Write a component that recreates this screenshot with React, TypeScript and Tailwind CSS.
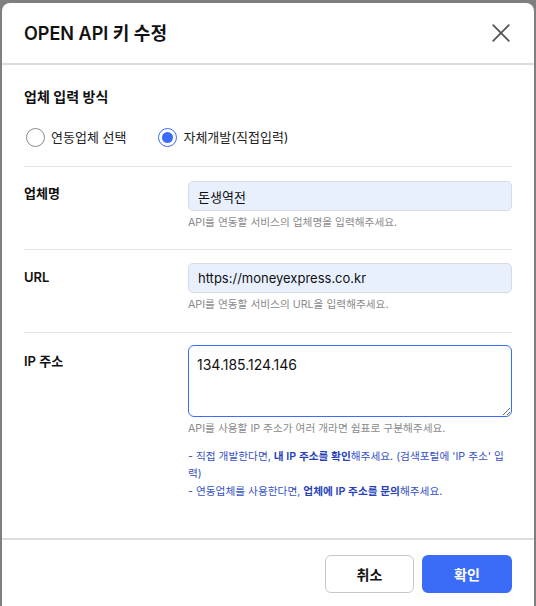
import { useState } from "react";

const font = { fontFamily: "Inter, 'Noto Sans CJK KR', sans-serif" };

const Radio = ({ checked, label, onClick }: { checked: boolean; label: string; onClick: () => void }) => (
  <label onClick={onClick} className="flex items-center gap-[6px] cursor-pointer">
    <span
      className={
        checked
          ? "flex justify-center items-center border border-[#3a6cf8] rounded-full w-[19px] h-[19px]"
          : "flex justify-center items-center border border-[#8a8a8a] rounded-full w-[19px] h-[19px]"
      }
    >
      {checked && <span className="bg-[#3a6cf8] rounded-full w-[11px] h-[11px]" />}
    </span>
    <span className="text-[13px] text-[#222] leading-[20px]">{label}</span>
  </label>
);

export default function App() {
  const [mode, setMode] = useState("self");
  const [name, setName] = useState("돈생역전");
  const [url, setUrl] = useState("https://moneyexpress.co.kr");
  const [ip, setIp] = useState("134.185.124.146");

  return (
    <div style={font} className="bg-[#7f7f7f] pt-[3px] pr-[2px] pl-[2px] w-[536px] h-[606px] overflow-hidden">
      <div className="flex flex-col bg-white rounded-t-[8px] w-[532px] min-h-[620px]">
        {/* header */}
        <div className="flex justify-between items-center px-[22px] border-[#dcdcdc] border-b-2 h-[62px]">
          <h1 className="font-semibold text-[#111] text-[18px]">OPEN API 키 수정</h1>
          <button className="flex justify-center items-center w-[22px] h-[22px]">
            <svg width="18" height="18" viewBox="0 0 18 18" fill="none" stroke="#555" strokeWidth="1.8" strokeLinecap="round">
              <path d="M1.2 1.2 L16.8 16.8 M16.8 1.2 L1.2 16.8" />
            </svg>
          </button>
        </div>

        {/* body */}
        <div className="px-[22px]">
          <div className="pt-[22px] pb-[19px] border-[#e2e2e2] border-b">
            <p className="font-semibold text-[#111] text-[14px] leading-[20px]">업체 입력 방식</p>
            <div className="flex gap-[32px] mt-[20px] ml-[2px]">
              <Radio checked={mode === "link"} label="연동업체 선택" onClick={() => setMode("link")} />
              <Radio checked={mode === "self"} label="자체개발(직접입력)" onClick={() => setMode("self")} />
            </div>
          </div>

          <div className="flex pt-[14px] pb-[18px] border-[#e2e2e2] border-b">
            <p className="mt-[2px] w-[164px] font-semibold text-[#111] text-[13px] leading-[20px]">업체명</p>
            <div className="flex-1">
              <input
                value={name}
                onChange={(e) => setName(e.target.value)}
                className="bg-[#e8f0fe] px-[9px] border border-[#d5dae3] rounded-[5px] outline-none w-full h-[30px] text-[#111] text-[13px]"
              />
              <p className="mt-[4px] text-[#8a8a8a] text-[10.7px] leading-[16px]">API를 연동할 서비스의 업체명을 입력해주세요.</p>
            </div>
          </div>

          <div className="flex pt-[13px] pb-[19px] border-[#e2e2e2] border-b">
            <p className="mt-[4px] w-[164px] font-semibold text-[#111] text-[13px] leading-[20px]">URL</p>
            <div className="flex-1">
              <input
                value={url}
                onChange={(e) => setUrl(e.target.value)}
                className="bg-[#e8f0fe] px-[9px] border border-[#d5dae3] rounded-[5px] outline-none w-full h-[30px] text-[#111] text-[13px]"
              />
              <p className="mt-[4px] text-[#8a8a8a] text-[10.7px] leading-[16px]">API를 연동할 서비스의 URL을 입력해주세요.</p>
            </div>
          </div>

          <div className="flex pt-[12px] pb-[38px]">
            <p className="mt-[6px] w-[164px] font-semibold text-[#111] text-[13px] leading-[20px]">IP 주소</p>
            <div className="flex-1">
              <textarea
                value={ip}
                onChange={(e) => setIp(e.target.value)}
                className="block px-[8px] py-[8px] border-[#3a6cf8] border-[1.5px] rounded-[6px] outline-none w-full h-[72px] text-[#111] text-[14px] leading-[22px] resize-y"
              />
              <p className="mt-[4px] text-[#8a8a8a] text-[10.7px] leading-[16px]">API를 사용할 IP 주소가 여러 개라면 쉼표로 구분해주세요.</p>
              <div className="flex flex-col gap-[1px] mt-[11px] text-[#3452c6] text-[10.7px] leading-[17px]">
                <p>
                  - 직접 개발한다면, <span className="font-semibold text-[#2642b8]">내 IP 주소를 확인</span>해주세요. (검색포털에 'IP 주소' 입력)
                </p>
                <p>
                  - 연동업체를 사용한다면, <span className="font-semibold text-[#2642b8]">업체에 IP 주소를 문의</span>해주세요.
                </p>
              </div>
            </div>
          </div>
        </div>

        {/* footer */}
        <div className="flex justify-end gap-[8px] px-[22px] pt-[15px] pb-[40px] border-[#dcdcdc] border-t-2">
          <button className="bg-white border border-[#c8c8c8] rounded-[6px] w-[89px] h-[38px] font-semibold text-[#111] text-[14px]">
            취소
          </button>
          <button className="bg-[#3a6cf8] rounded-[6px] w-[90px] h-[38px] font-semibold text-[14px] text-white">
            확인
          </button>
        </div>
      </div>
    </div>
  );
}
